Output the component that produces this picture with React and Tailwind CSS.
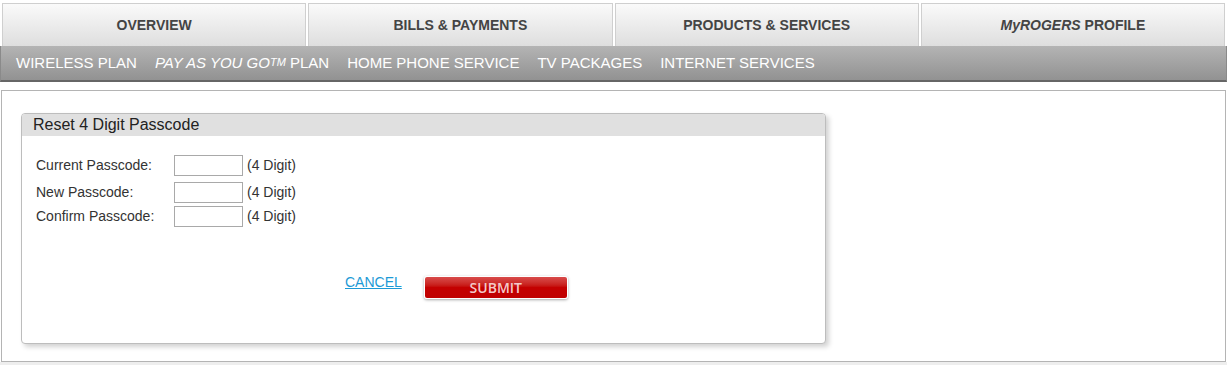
const tabs = [
  { key: "overview", label: <>OVERVIEW</> },
  { key: "bills", label: <>BILLS &amp; PAYMENTS</> },
  { key: "products", label: <>PRODUCTS &amp; SERVICES</> },
  { key: "profile", label: <><i>MyROGERS</i>&nbsp;PROFILE</> },
];

const subLinks = [
  <>WIRELESS PLAN</>,
  <><i>PAY AS YOU GO<sup className="text-[11px] relative -top-[2px]">TM</sup></i> PLAN</>,
  <>HOME PHONE SERVICE</>,
  <>TV PACKAGES</>,
  <>INTERNET SERVICES</>,
];

function PasscodeRow({ label, className }) {
  return (
    <div className={`flex items-center ${className}`}>
      <label className="w-[138px] text-[14px] text-[#333]">{label}</label>
      <input type="password" className="w-[69px] h-[21px] border border-[#a9a9a9] bg-white outline-none" />
      <span className="ml-[4px] text-[14px] text-[#333]">(4 Digit)</span>
    </div>
  );
}

export default function App() {
  return (
    <div className="w-[1227px] h-[365px] bg-white flex flex-col font-['Liberation_Sans',Arial,sans-serif]">
      {/* top tabs */}
      <div className="grid grid-cols-4 gap-[2px] pl-[2px] pr-[2px] pt-[3px]">
        {tabs.map((t) => (
          <div
            key={t.key}
            className="h-[43px] flex items-center justify-center border border-b-0 border-[#cfcfcf] bg-gradient-to-b from-[#fafafa] to-[#dedede] text-[14px] font-bold text-[#444]"
          >
            {t.label}
          </div>
        ))}
      </div>

      {/* sub navigation */}
      <div className="h-[36px] flex items-center gap-[18px] px-[15px] bg-gradient-to-b from-[#b4b4b4] to-[#929292] border-b-2 border-[#666] border-x border-x-[#8a8a8a]">
        {subLinks.map((l, i) => (
          <span key={i} className="text-[15px] text-white whitespace-nowrap">
            {l}
          </span>
        ))}
      </div>

      {/* content */}
      <div className="mt-[8px] mx-[1px] h-[272px] border border-[#b4b4b4] pt-[22px] pl-[19px]">
        <div className="w-[805px] h-[231px] rounded-[4px] border border-[#bdbdbd] bg-white shadow-[3px_3px_5px_rgba(0,0,0,0.18)] overflow-hidden flex flex-col">
          <div className="h-[22px] bg-[#e0e0e0] pl-[11px] flex items-center text-[16px] text-[#222]">
            Reset 4 Digit Passcode
          </div>
          <div className="pl-[14px] pt-[19px]">
            <PasscodeRow label="Current Passcode:" />
            <PasscodeRow label="New Passcode:" className="mt-[6px]" />
            <PasscodeRow label="Confirm Passcode:" className="mt-[3px]" />
          </div>
          <div className="flex items-start pl-[323px] mt-[49px]">
            <a href="#" className="text-[14px] text-[#1d9ad6] underline mt-[-4px]">CANCEL</a>
            <button
              type="button"
              className="ml-[22px] w-[144px] h-[23px] rounded-[3px] bg-gradient-to-b from-[#d84a4a] via-[#c40000] to-[#c00000] border border-white shadow-[0_1px_3px_rgba(0,0,0,0.35)] text-[14px] font-semibold text-[#f3caca] font-['Open_Sans',sans-serif] leading-none"
            >
              SUBMIT
            </button>
          </div>
        </div>
      </div>
      <div className="flex-1 bg-[#eeeeee]" />
    </div>
  );
}
